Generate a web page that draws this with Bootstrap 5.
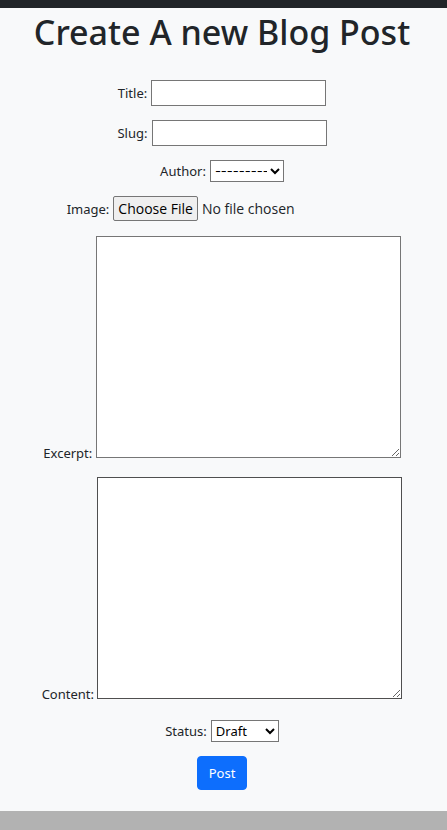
<!DOCTYPE html>
<html lang="en">
<head>
<meta charset="utf-8">
<meta name="viewport" content="width=device-width, initial-scale=1">
<title>Create A new Blog Post</title>
<link href="https://cdn.jsdelivr.net/npm/bootstrap@5.3.0/dist/css/bootstrap.min.css" rel="stylesheet">
<style>
body{font-family:"Noto Sans","Open Sans",sans-serif;font-size:13px;line-height:20px;background:#b2b2b2}
.topbar{height:8px}
.page-title{font-size:34px;font-weight:500;line-height:42px;margin-bottom:27px}
.post-form{padding:3px 3px 21px 0}
.fields{gap:14px}
.post-form input,.post-form select,.post-form textarea{background:#fff;border:1px solid #767676;border-radius:0;color:#000}
.post-form input[type=text]{width:175px;height:26px}
.post-form select{height:22px;padding:0;width:68px}
.post-form #author{width:74px;font-family:Inter,"Noto Sans",sans-serif}
.post-form input[type=file]{border:0;background:none;width:264px;height:26px;color:#212529;font-family:"Open Sans","Noto Sans",sans-serif;font-size:14px}
.post-form input::file-selector-button{height:25px;padding:0 4px;border:1px solid #767676;border-radius:2px;background:#efefef;color:#000}
.post-form textarea{width:305px;height:222px;vertical-align:baseline}
.post-form #content{border-color:#4f4f4f}
.status-row{padding-top:2px}
.btn-post{font-size:13px;line-height:20px;padding:6px 11px;border-radius:4px}
</style>
</head>
<body>
<div class="topbar bg-dark"></div>
<main class="bg-light text-center post-form">
<h1 class="page-title">Create A new Blog Post</h1>
<form class="fields d-flex flex-column align-items-center">
<div class="d-flex align-items-center gap-1"><label for="title">Title:</label><input type="text" id="title"></div>
<div class="d-flex align-items-center gap-1"><label for="slug">Slug:</label><input type="text" id="slug"></div>
<div class="d-flex align-items-center gap-1"><label for="author">Author:</label><select id="author"><option>---------</option></select></div>
<div class="d-flex align-items-center gap-1"><label for="image">Image:</label><input type="file" id="image"></div>
<div><label for="excerpt">Excerpt:</label> <textarea id="excerpt"></textarea></div>
<div><label for="content">Content:</label> <textarea id="content"></textarea></div>
<div class="d-flex align-items-center gap-1 status-row"><label for="status">Status:</label><select id="status"><option>Draft</option><option>Publish</option></select></div>
<button type="submit" class="btn btn-primary btn-post">Post</button>
</form>
</main>
<script src="https://cdn.jsdelivr.net/npm/bootstrap@5.3.0/dist/js/bootstrap.bundle.min.js"></script>
</body>
</html>
